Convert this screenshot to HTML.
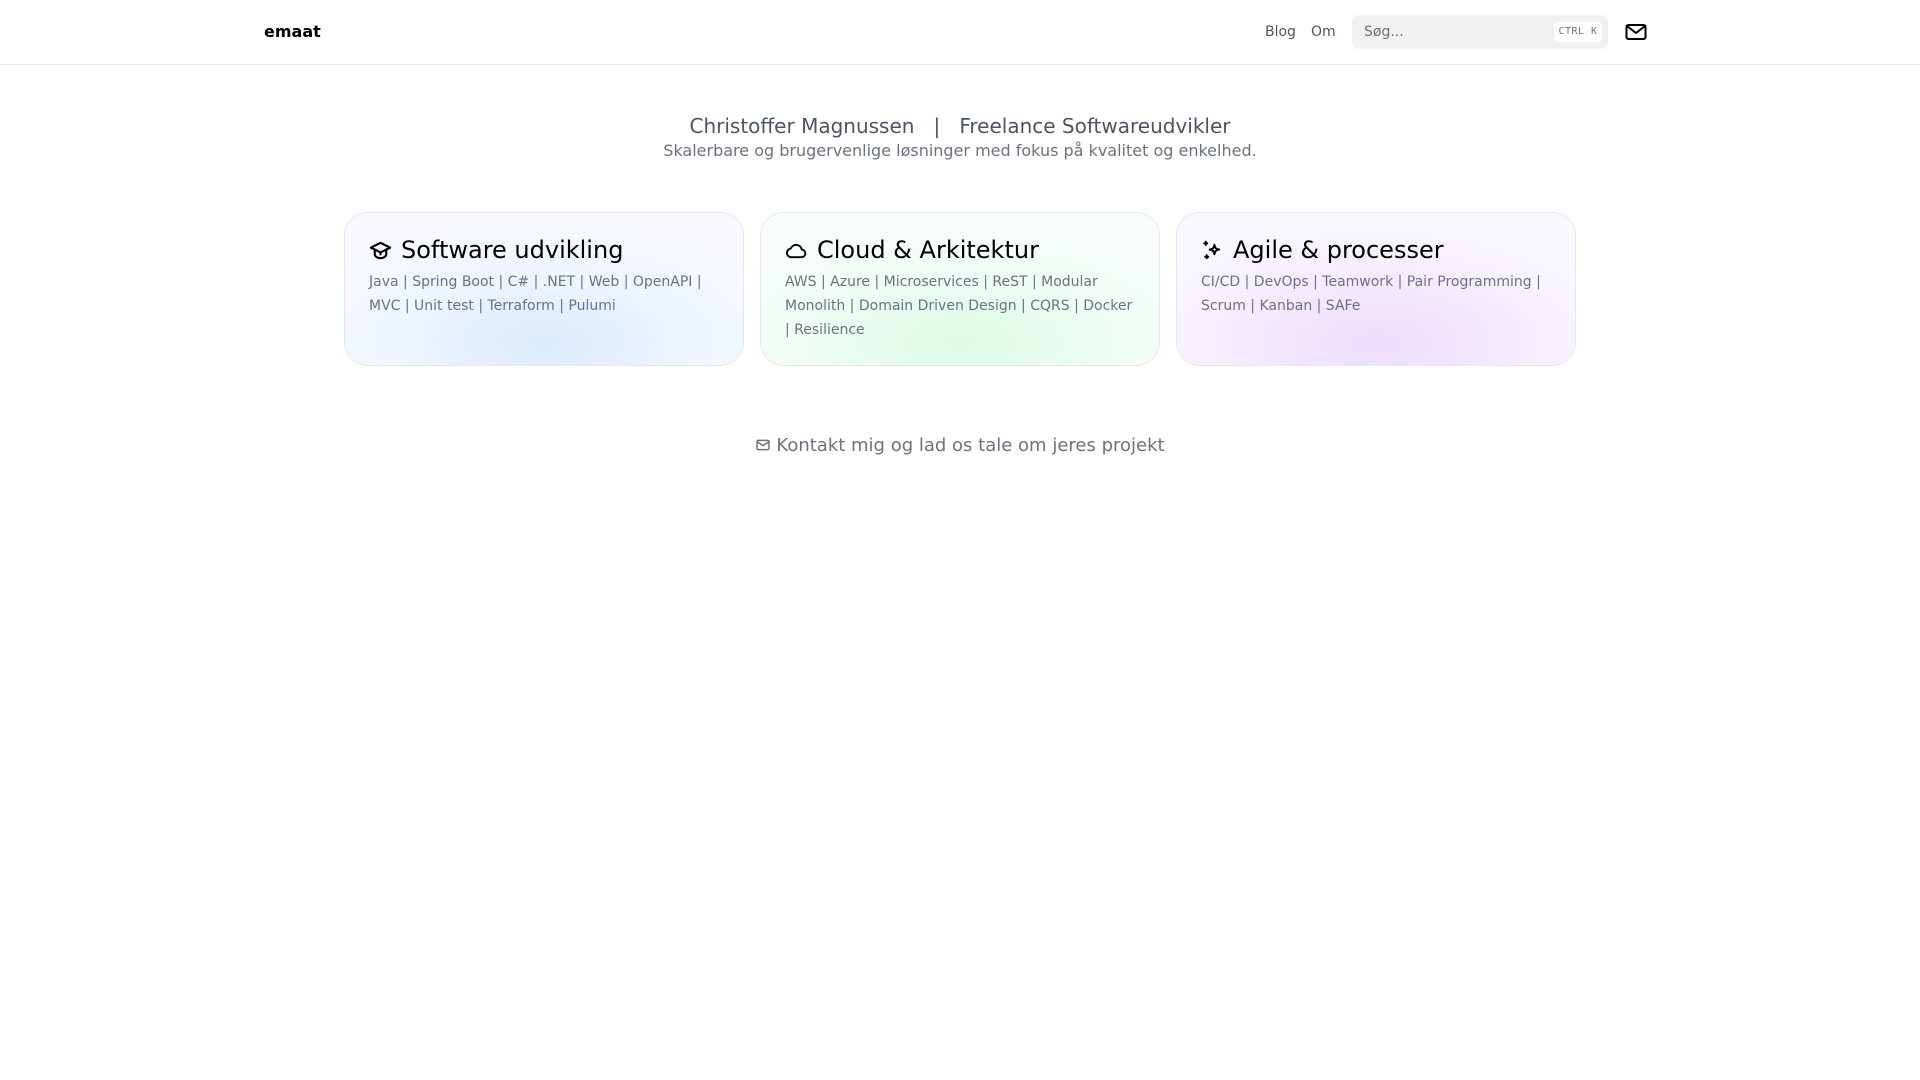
<!DOCTYPE html>
<html><head><meta charset="utf-8"><style>
*{box-sizing:border-box;margin:0;padding:0}
body{width:1920px;height:1080px;background:#fff;font-family:"DejaVu Sans","Liberation Sans",sans-serif;color:#111;position:relative;overflow:hidden}
header{position:absolute;left:0;top:0;width:1920px;height:65px;border-bottom:1px solid #e5e7eb}
.logo{position:absolute;left:264px;top:22px;font-weight:bold;font-size:16px;color:#000}
.nav{position:absolute;top:24px;font-size:14px;color:#4b5563}
.search{position:absolute;left:1352px;top:15px;width:256px;height:34px;background:#f1f1f1;border-radius:8px}
.search span{position:absolute;left:12px;top:9px;font-size:14px;color:#6b7280}
.kbd{position:absolute;right:6px;top:7px;height:20px;width:48px;background:#fff;border-radius:4px;font-family:"DejaVu Sans Mono",monospace;font-size:10px;color:#6b7280;text-align:center;line-height:20px;letter-spacing:.5px}
.mail{position:absolute;left:1624px;top:20px}
.title{position:absolute;top:112px;width:1920px;text-align:center;font-size:20px;color:#4b5563;white-space:pre;line-height:28px}
.sub{position:absolute;top:140px;width:1920px;text-align:center;font-size:16px;color:#6b7280;line-height:22px}
.card{position:absolute;top:212px;width:400px;height:154px;border:1px solid #e5e7eb;border-radius:24px;padding:21px 24px}
.card h2{font-weight:normal;font-size:24px;line-height:32px;color:#000;display:flex;align-items:center;margin-bottom:4px}
.card h2 svg{margin-right:9px}
.card p{font-size:14px;line-height:24px;color:#6b7280}
.c1{left:344px;background:radial-gradient(ellipse 260px 120px at 50% 85%,#dbeafe,#eff6ff 60%,#f8faff 100%)}
.c2{left:760px;background:radial-gradient(ellipse 260px 120px at 50% 85%,#dcfce7,#effdf4 60%,#f9fefb 100%)}
.c3{left:1176px;background:radial-gradient(ellipse 260px 120px at 50% 85%,#ecdcfe,#f5eefe 60%,#fbf8ff 100%)}
.contact{position:absolute;top:434px;width:1920px;text-align:center;font-size:18px;color:#6b7280;line-height:24px}
</style></head><body>
<header>
<div class="logo">emaat</div>
<div class="nav" style="left:1265px">Blog</div>
<div class="nav" style="left:1311px">Om</div>
<div class="search"><span>Søg...</span><div class="kbd">CTRL K</div></div>
<svg class="mail" width="24" height="24" viewBox="0 0 24 24" fill="none" stroke="#000" stroke-width="2" stroke-linejoin="round"><rect x="2.5" y="5" width="19" height="14" rx="2"/><path d="M3 6l9 7 9-7"/></svg>
</header>
<div class="title">Christoffer Magnussen   |   Freelance Softwareudvikler</div>
<div class="sub">Skalerbare og brugervenlige løsninger med fokus på kvalitet og enkelhed.</div>

<div class="card c1"><h2><svg width="23" height="23" viewBox="0 0 24 24" fill="none" stroke="#000" stroke-width="2.2" stroke-linejoin="round"><path d="M12 4L2 9l10 5 10-5z"/><path d="M6 11v5c0 2 3 4 6 4s6-2 6-4v-5"/><path d="M12 14v3"/></svg>Software udvikling</h2>
<p>Java | Spring Boot | C# | .NET | Web | OpenAPI | MVC | Unit test | Terraform | Pulumi</p></div>

<div class="card c2"><h2><svg width="23" height="23" viewBox="0 0 24 24" fill="none" stroke="#000" stroke-width="2" stroke-linejoin="round"><path d="M7 19h10a4 4 0 0 0 .5-8A6 6 0 0 0 6 10a4.5 4.5 0 0 0 1 9z"/></svg>Cloud &amp; Arkitektur</h2>
<p>AWS | Azure | Microservices | ReST | Modular Monolith | Domain Driven Design | CQRS | Docker | Resilience</p></div>

<div class="card c3"><h2><svg width="23" height="23" viewBox="0 0 24 24" fill="none" stroke="#000" stroke-width="2" stroke-linejoin="round"><path d="M14 6c.6 3.5 1.5 4.4 5 5-3.5.6-4.4 1.5-5 5-.6-3.5-1.5-4.4-5-5 3.5-.6 4.4-1.5 5-5z"/><path d="M5 2v5M2.5 4.5h5M6 16v5M3.5 18.5h5"/></svg>Agile &amp; processer</h2>
<p>CI/CD | DevOps | Teamwork | Pair Programming | Scrum | Kanban | SAFe</p></div>

<div class="contact"><svg width="16" height="16" viewBox="0 0 24 24" fill="none" stroke="#6b7280" stroke-width="2.2" style="vertical-align:-2px;margin-right:5px"><rect x="3" y="5" width="18" height="14" rx="2"/><path d="M3 7l9 6 9-6"/></svg>Kontakt mig og lad os tale om jeres projekt</div>
</body></html>
